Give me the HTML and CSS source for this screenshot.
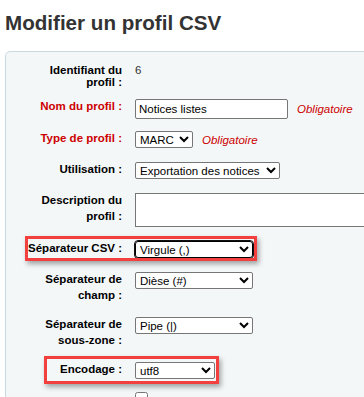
FILE: index.html
```html
<!DOCTYPE html>
<html>
<head>
  <title>Modifier un profil CSV</title>
  <link rel="stylesheet" href="styles.css">
</head>
<body>
  <h1>Modifier un profil CSV</h1>

  <div class="rows">
    <ol>
      <li class="row row-id">
        <span class="label">Identifiant du profil :</span>
        <span class="value">6</span>
      </li>
      <li class="row compact">
        <label class="label required" for="name">Nom du profil :</label>
        <span class="field">
          <input type="text" id="name" class="text-input" value="Notices listes">
          <span class="hint">Obligatoire</span>
        </span>
      </li>
      <li class="row">
        <label class="label required" for="type">Type de profil :</label>
        <span class="field">
          <select id="type" class="select select-type">
            <option>MARC</option>
            <option>SQL</option>
          </select>
          <span class="hint">Obligatoire</span>
        </span>
      </li>
      <li class="row">
        <label class="label" for="usage">Utilisation :</label>
        <span class="field">
          <select id="usage" class="select select-usage">
            <option>Exportation des notices</option>
          </select>
        </span>
      </li>
      <li class="row">
        <label class="label" for="description">Description du profil :</label>
        <span class="field">
          <textarea id="description" class="textarea"></textarea>
        </span>
      </li>
      <li class="row">
        <label class="label" for="csvSep">Séparateur CSV :</label>
        <span class="field">
          <select id="csvSep" class="select select-sep focused">
            <option>Virgule (,)</option>
            <option>Point-virgule (;)</option>
          </select>
        </span>
        <span class="highlight highlight-csv"></span>
      </li>
      <li class="row">
        <label class="label" for="fieldSep">Séparateur de champ :</label>
        <span class="field">
          <select id="fieldSep" class="select select-sep">
            <option>Dièse (#)</option>
          </select>
        </span>
      </li>
      <li class="row">
        <label class="label" for="subfieldSep">Séparateur de sous-zone :</label>
        <span class="field">
          <select id="subfieldSep" class="select select-sep">
            <option>Pipe (|)</option>
          </select>
        </span>
      </li>
      <li class="row compact">
        <label class="label" for="encoding">Encodage :</label>
        <span class="field">
          <select id="encoding" class="select select-enc">
            <option>utf8</option>
          </select>
        </span>
        <span class="highlight highlight-enc"></span>
      </li>
      <li class="row">
        <span class="label"></span>
        <span class="field">
          <input type="checkbox" class="checkbox">
        </span>
      </li>
    </ol>
  </div>
</body>
</html>
```

FILE: styles.css
```css
html {
  overflow: hidden;
  scrollbar-width: none;
}

::-webkit-scrollbar {
  display: none;
  width: 0;
  height: 0;
}

body {
  margin: 0;
  padding-left: 5px;
  height: 397px;
  overflow: hidden;
  font-family: "Liberation Sans", Arial, sans-serif;
  font-size: 11.5px;
  color: #000;
  background-color: #fff;
}

h1 {
  font-size: 20.6px;
  line-height: 24px;
  margin: 0;
  padding: 11px 0 16px;
  color: #333;
}

.rows {
  height: 360px;
  margin-right: -40px;
  box-sizing: border-box;
  padding: 12px 0 0 16px;
  border: 1px solid #c8dadf;
  border-radius: 5px;
  background-color: #f4f7f8;
}

.rows ol {
  list-style: none;
  margin: 0;
  padding: 0;
}

.row {
  position: relative;
  display: flex;
  align-items: flex-start;
  padding-bottom: 14px;
}

.row.compact {
  padding-bottom: 12px;
}

.row-id {
  line-height: 12px;
  padding-bottom: 11px;
}

.label {
  flex: none;
  width: 100px;
  margin-right: 13px;
  text-align: right;
  font-weight: bold;
  line-height: 15.5px;
}

.row-id .label {
  line-height: 12px;
}

.required {
  color: #cc0000;
}

.value {
  color: #333;
}

.field {
  display: flex;
  flex: none;
  align-items: center;
}

.hint {
  margin-left: 9px;
  color: #cc0000;
  font-style: italic;
}

.text-input {
  width: 153px;
  height: 20px;
  box-sizing: border-box;
  padding: 0 3px;
  border: 1px solid #767676;
  border-radius: 2px;
  background-color: #fff;
  font-family: "Liberation Sans", Arial, sans-serif;
  font-size: 11.5px;
  color: #000;
}

.select {
  height: 17px;
  box-sizing: border-box;
  padding: 0;
  border: 1px solid #767676;
  border-radius: 2px;
  background-color: #fff;
  font-family: "Liberation Sans", Arial, sans-serif;
  font-size: 11.5px;
  color: #000;
}

.select-type {
  width: 58px;
}

.select-usage {
  width: 145px;
}

.select-sep {
  width: 118px;
}

.select-enc {
  width: 80px;
}

.select.focused {
  border-color: #000;
  border-radius: 3px;
  outline: 1px solid #111;
}

.textarea {
  width: 260px;
  height: 34px;
  box-sizing: border-box;
  margin: 0;
  border: 1px solid #767676;
  background-color: #fff;
  resize: none;
}

.checkbox {
  margin: 1px 0 0;
  width: 13px;
  height: 13px;
}

/* annotation frames drawn over the rows */
.highlight {
  position: absolute;
  z-index: 1;
  box-sizing: border-box;
  border: 3px solid #f2403f;
  box-shadow: 2px 3px 5px rgba(0, 0, 0, 0.35);
  pointer-events: none;
}

.highlight-csv {
  left: 3px;
  top: -5px;
  width: 232px;
  height: 25px;
}

.highlight-enc {
  left: 22px;
  top: -6px;
  width: 175px;
  height: 28px;
}
```
